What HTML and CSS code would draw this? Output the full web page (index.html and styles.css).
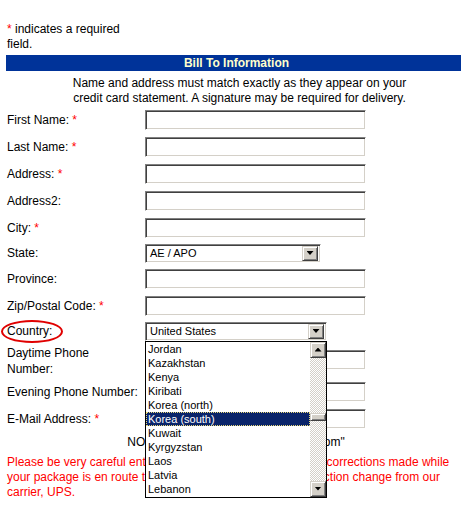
FILE: index.html
```html
<!DOCTYPE html>
<html lang="en">
<head>
  <meta charset="UTF-8" />
  <title>Bill To Information</title>
  <link rel="stylesheet" href="styles.css">
</head>
<body>
  <div class="page">
    <div class="note"><span class="req">*</span> indicates a required field.</div>
    <div class="bar">Bill To Information</div>
    <p class="desc">Name and address must match exactly as they appear on your<br>credit card statement. A signature may be required for delivery.</p>

    <div class="form">
      <div class="row"><label>First Name: <span class="req">*</span></label><span class="field"></span></div>
      <div class="row"><label>Last Name: <span class="req">*</span></label><span class="field"></span></div>
      <div class="row"><label>Address: <span class="req">*</span></label><span class="field"></span></div>
      <div class="row"><label>Address2:</label><span class="field"></span></div>
      <div class="row"><label>City: <span class="req">*</span></label><span class="field"></span></div>
      <div class="row sel">
        <label>State:</label>
        <div class="select state"><span class="value">AE / APO</span><span class="btn"><i class="arrow down"></i></span></div>
      </div>
      <div class="row"><label>Province:</label><span class="field"></span></div>
      <div class="row"><label>Zip/Postal Code: <span class="req">*</span></label><span class="field"></span></div>
      <div class="row sel">
        <label class="circled">Country:</label>
        <div class="select country">
          <span class="value">United States</span><span class="btn"><i class="arrow down"></i></span>
          <div class="list">
            <ul class="options">
              <li>Jordan</li>
              <li>Kazakhstan</li>
              <li>Kenya</li>
              <li>Kiribati</li>
              <li>Korea (north)</li>
              <li class="chosen">Korea (south)</li>
              <li>Kuwait</li>
              <li>Kyrgyzstan</li>
              <li>Laos</li>
              <li>Latvia</li>
              <li>Lebanon</li>
            </ul>
            <div class="scroll">
              <span class="btn"><i class="arrow up"></i></span>
              <span class="track"><span class="thumb"></span></span>
              <span class="btn"><i class="arrow down"></i></span>
            </div>
          </div>
        </div>
      </div>
      <div class="row tall"><label>Daytime Phone<br>Number:</label><span class="field"></span></div>
      <div class="row"><label>Evening Phone Number:</label><span class="field"></span></div>
      <div class="row"><label>E-Mail Address: <span class="req">*</span></label><span class="field"></span></div>
    </div>

    <p class="mail-note">NOTE: Do not use "name@domain.com"</p>
    <p class="warn">Please be very careful entering your shipping address.&nbsp; Any corrections made while<br>your package is en route to you will result in a $10.00 redirection change from our<br>carrier, UPS.</p>
  </div>
</body>
</html>
```

FILE: styles.css
```css
html, body {
  margin: 0;
  padding: 0;
  background: #fff;
  overflow: hidden;
}

body {
  font: 12px "Liberation Sans", Arial, sans-serif;
  color: #000;
}

.page {
  padding: 22px 0 0 6px;
}

.req {
  color: #ff0000;
}

.note {
  width: 132px;
  padding-left: 1px;
  line-height: 15px;
}

.bar {
  margin: 3px -6px 0 0;
  height: 16px;
  line-height: 16px;
  background: #003399;
  color: #ffffcc;
  font-weight: bold;
  text-align: center;
}

.desc {
  margin: 0;
  padding: 5px 0 0 12px;
  line-height: 15px;
  text-align: center;
}

/* form rows */
.row {
  display: flex;
  align-items: center;
  height: 27px;
}

.row.sel {
  height: 24px;
}

.row.sel + .row.tall {
  margin-top: 1px;
}

.row.tall {
  height: 34px;
}

.row.tall label {
  line-height: 16px;
  align-self: flex-start;
  padding-top: 1px;
}

.row.tall .field {
  margin-top: -3px;
}

label {
  width: 138px;
  padding-left: 1px;
  flex-shrink: 0;
}

.field {
  width: 221px;
  height: 20px;
  box-sizing: border-box;
  border: 1px solid;
  border-color: #808080 #fff #fff #808080;
  box-shadow: inset 1px 1px 0 #404040, inset -1px -1px 0 #d4d0c8;
  background: #fff;
}

/* fake select boxes */
.select {
  position: relative;
  display: flex;
  align-items: center;
  height: 19px;
  box-sizing: border-box;
  border: 1px solid;
  border-color: #808080 #fff #fff #808080;
  box-shadow: inset 1px 1px 0 #404040, inset -1px -1px 0 #d4d0c8;
  padding: 2px;
  font-size: 11px;
}

.select.state {
  width: 176px;
}

.select.country {
  width: 182px;
}

.select .value {
  flex: 1;
  padding-left: 2px;
}

.btn {
  display: flex;
  align-items: center;
  justify-content: center;
  width: 16px;
  height: 15px;
  box-sizing: border-box;
  background: #d4d0c8;
  border: 1px solid;
  border-color: #d4d0c8 #404040 #404040 #d4d0c8;
  box-shadow: inset 1px 1px 0 #fff, inset -1px -1px 0 #808080;
}

.arrow {
  display: block;
  width: 7px;
  height: 4px;
  background: #000;
}

.arrow.down {
  clip-path: polygon(0 0, 100% 0, 50% 100%);
}

.arrow.up {
  clip-path: polygon(50% 0, 100% 100%, 0 100%);
}

/* open country list */
.list {
  position: absolute;
  left: -1px;
  top: 18px;
  width: 182px;
  height: 157px;
  box-sizing: border-box;
  border: 1px solid #000;
  background: #fff;
  display: flex;
  z-index: 5;
}

.options {
  list-style: none;
  margin: 0;
  padding: 0;
  flex: 1;
}

.options li {
  height: 14px;
  line-height: 14px;
  padding-left: 2px;
}

.options li.chosen {
  background: #0a246a;
  color: #fff;
  outline: 1px dotted #e8d878;
  outline-offset: -1px;
}

.scroll {
  width: 16px;
  display: flex;
  flex-direction: column;
}

.scroll .btn {
  height: 16px;
}

.track {
  position: relative;
  flex: 1;
  background: conic-gradient(#d4d0c8 25%, #fff 0 50%, #d4d0c8 0 75%, #fff 0);
  background-size: 2px 2px;
}

.thumb {
  position: absolute;
  left: 0;
  top: 55px;
  width: 16px;
  height: 8px;
  box-sizing: border-box;
  background: #d4d0c8;
  border: 1px solid;
  border-color: #d4d0c8 #404040 #404040 #d4d0c8;
  box-shadow: inset 1px 1px 0 #fff, inset -1px -1px 0 #808080;
}

/* red hand-drawn ring round the label */
.circled {
  position: relative;
}

.circled::after {
  content: "";
  position: absolute;
  left: -5px;
  top: 50%;
  width: 58px;
  height: 19px;
  margin-top: -11px;
  border: 2px solid #e00000;
  border-radius: 50%;
}

.mail-note {
  margin: 3px 0 0;
  padding-left: 5px;
  line-height: 15px;
  text-align: center;
}

.warn {
  margin: 5px 0 0;
  padding-left: 1px;
  line-height: 15px;
  color: #ff0000;
  white-space: nowrap;
}
```
